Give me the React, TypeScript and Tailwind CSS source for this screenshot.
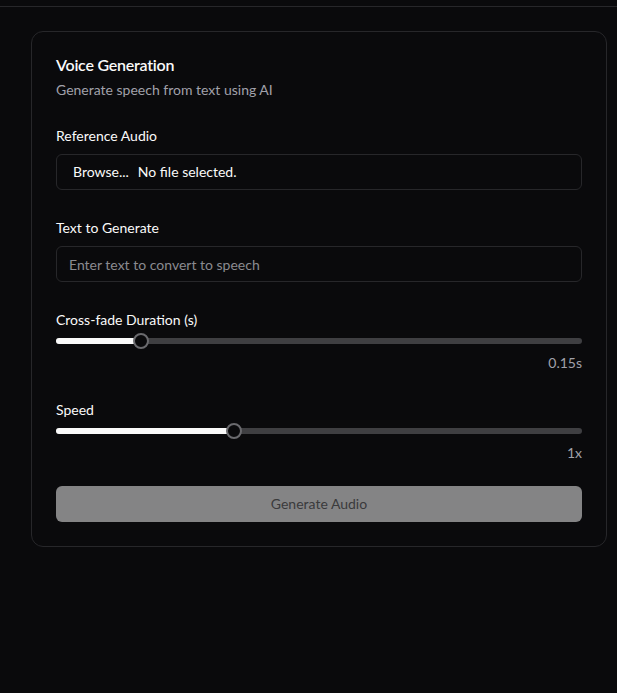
import { useState } from 'react';

function Slider({ value, min, max }: { value: number; min: number; max: number }) {
    const f = (value - min) / (max - min);
    // thumb stays inside the track: 8px half-thumb on each side
    const left = `calc(${f} * (100% - 16px) + 8px)`;
    return (
        <div className="relative h-4 w-full">
            <div className="absolute left-0 right-0 top-[5px] h-[6px] rounded-full bg-[#3f3f42]" />
            <div className="absolute left-0 top-[5px] h-[6px] rounded-full bg-[#fafafa]" style={{ width: left }} />
            <div
                className="absolute top-0 h-4 w-4 -translate-x-1/2 rounded-full border-2 border-[#6a6a6e] bg-[#0a0a0c]"
                style={{ left }}
            />
        </div>
    );
}

export default function App() {
    const [text, setText] = useState('');

    return (
        <div
            className="min-h-[693px] bg-[#0a0a0c] text-[#fafafa]"
            style={{ fontFamily: '"Segoe UI", Lato, "Open Sans", sans-serif' }}
        >
            <div className="h-[7px] border-b border-[#27272a]" />
            <div className="pl-[31px] pr-[11px] pt-[24px]">
                <div className="w-[576px] rounded-xl border border-[#27272a] bg-[#0a0a0c] p-6">
                    <h2 className="text-base font-semibold leading-[18px] tracking-[-0.015em]">Voice Generation</h2>
                    <p className="mt-1.5 text-sm leading-5 text-[#a1a1aa]">Generate speech from text using AI</p>

                    <label className="mt-[25px] block text-sm leading-[22px]">Reference Audio</label>
                    <div className="mt-[7px] flex h-9 items-center rounded-md border border-[#27272a] pl-4 text-sm text-[#fafafa]">
                        <span>Browse...</span>
                        <span className="ml-[9px]">No file selected.</span>
                    </div>

                    <label className="mt-[27px] block text-sm leading-[22px]">Text to Generate</label>
                    <input
                        value={text}
                        onChange={(e) => setText(e.target.value)}
                        placeholder="Enter text to convert to speech"
                        className="mt-[7px] block h-9 w-full rounded-md border border-[#27272a] bg-transparent px-3 text-sm text-[#fafafa] placeholder:text-[#8a8a90] outline-none"
                    />

                    <label className="mt-[27px] block text-sm leading-[22px]">Cross-fade Duration (s)</label>
                    <div className="mt-[2px]">
                        <Slider value={0.15} min={0} max={1} />
                    </div>
                    <div className="mt-[3px] text-right text-sm leading-[22px] text-[#a1a1aa]">0.15s</div>

                    <label className="mt-[25px] block text-sm leading-[22px]">Speed</label>
                    <div className="mt-[2px]">
                        <Slider value={1} min={0.5} max={2} />
                    </div>
                    <div className="mt-[3px] text-right text-sm leading-[22px] text-[#a1a1aa]">1x</div>

                    <button
                        disabled
                        className="mt-[22px] flex h-9 w-full items-center justify-center rounded-md bg-[#848485] text-sm text-[#3a3a3c]"
                    >
                        Generate Audio
                    </button>
                </div>
            </div>
        </div>
    );
}
